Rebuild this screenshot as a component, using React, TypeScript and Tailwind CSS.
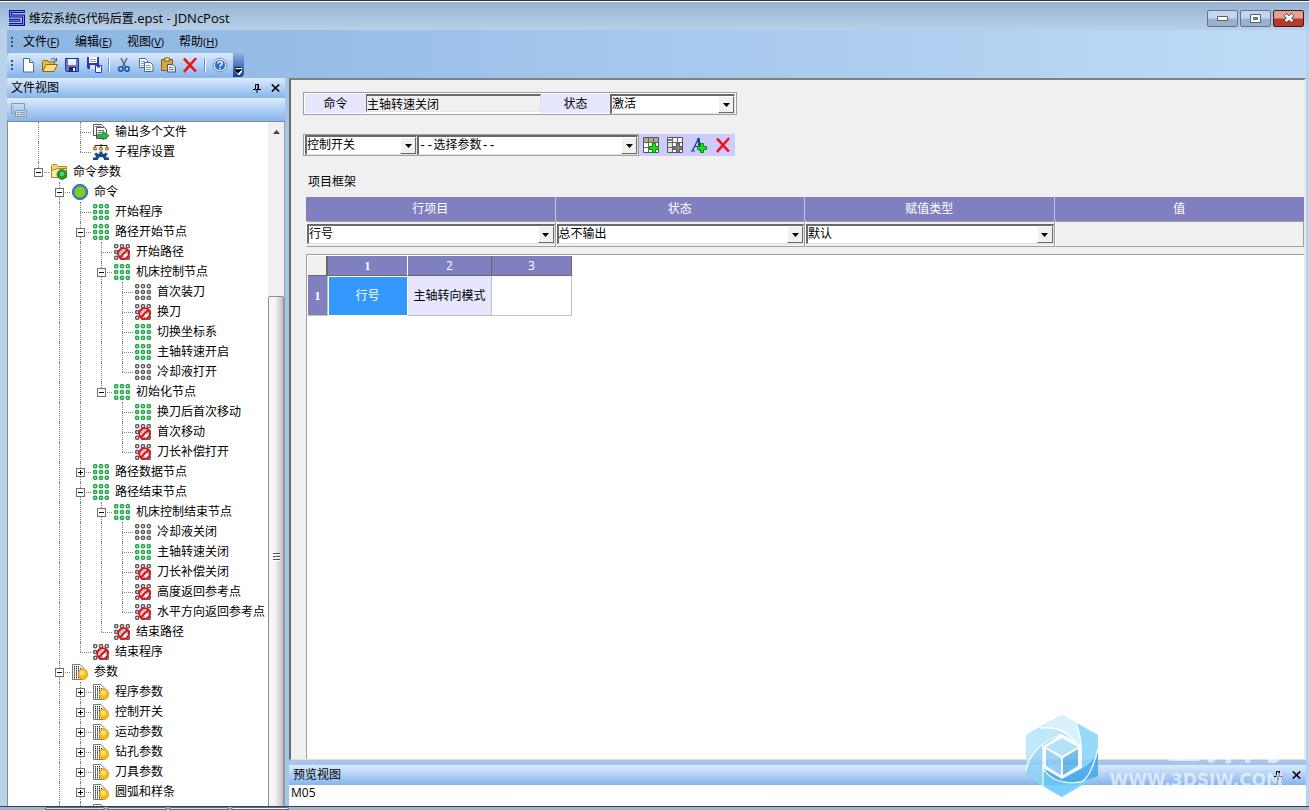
import type { ReactNode } from "react";
import clsx from "clsx";

type IconName = "on" | "idle" | "off" | "param" | "files" | "gear" | "folder" | "ball";

type Row = {
  depth: number;
  icon: IconName;
  label: string;
  box?: "+" | "-";
};

const ROWS: Row[] = [
  { depth: 2, icon: "files", label: "输出多个文件" },
  { depth: 2, icon: "gear", label: "子程序设置" },
  { depth: 0, icon: "folder", label: "命令参数", box: "-" },
  { depth: 1, icon: "ball", label: "命令", box: "-" },
  { depth: 2, icon: "on", label: "开始程序" },
  { depth: 2, icon: "on", label: "路径开始节点", box: "-" },
  { depth: 3, icon: "off", label: "开始路径" },
  { depth: 3, icon: "on", label: "机床控制节点", box: "-" },
  { depth: 4, icon: "idle", label: "首次装刀" },
  { depth: 4, icon: "off", label: "换刀" },
  { depth: 4, icon: "on", label: "切换坐标系" },
  { depth: 4, icon: "on", label: "主轴转速开启" },
  { depth: 4, icon: "idle", label: "冷却液打开" },
  { depth: 3, icon: "on", label: "初始化节点", box: "-" },
  { depth: 4, icon: "on", label: "换刀后首次移动" },
  { depth: 4, icon: "off", label: "首次移动" },
  { depth: 4, icon: "off", label: "刀长补偿打开" },
  { depth: 2, icon: "on", label: "路径数据节点", box: "+" },
  { depth: 2, icon: "on", label: "路径结束节点", box: "-" },
  { depth: 3, icon: "on", label: "机床控制结束节点", box: "-" },
  { depth: 4, icon: "idle", label: "冷却液关闭" },
  { depth: 4, icon: "on", label: "主轴转速关闭" },
  { depth: 4, icon: "off", label: "刀长补偿关闭" },
  { depth: 4, icon: "off", label: "高度返回参考点" },
  { depth: 4, icon: "off", label: "水平方向返回参考点" },
  { depth: 3, icon: "off", label: "结束路径" },
  { depth: 2, icon: "off", label: "结束程序" },
  { depth: 1, icon: "param", label: "参数", box: "-" },
  { depth: 2, icon: "param", label: "程序参数", box: "+" },
  { depth: 2, icon: "param", label: "控制开关", box: "+" },
  { depth: 2, icon: "param", label: "运动参数", box: "+" },
  { depth: 2, icon: "param", label: "钻孔参数", box: "+" },
  { depth: 2, icon: "param", label: "刀具参数", box: "+" },
  { depth: 2, icon: "param", label: "圆弧和样条", box: "+" },
  { depth: 2, icon: "param", label: "" },
  { depth: 1, icon: "param", label: "" },
];

// true when a later sibling exists at this depth, so the guide line goes on
function continues(index: number, depth: number) {
  for (let i = index + 1; i < ROWS.length; i++) {
    if (ROWS[i].depth < depth) return false;
    if (ROWS[i].depth === depth) return true;
  }
  return false;
}

function Svg({ children, size = 16 }: { children: ReactNode; size?: number }) {
  return (
    <svg width={size} height={size} viewBox={`0 0 ${size} ${size}`} aria-hidden className="block shrink-0">
      {children}
    </svg>
  );
}

function Dots({ color, fill }: { color: string; fill: string }) {
  return (
    <g fill={fill} stroke={color} strokeWidth="1.5">
      {[2.2, 8, 13.8].map((y) => [2.2, 8, 13.8].map((x) => <circle key={`${x}-${y}`} cx={x} cy={y} r="1.6" />))}
    </g>
  );
}

function TreeIcon({ name }: { name: IconName }) {
  switch (name) {
    case "on":
      return (
        <Svg>
          <Dots color="#1fa548" fill="#c9f0d0" />
        </Svg>
      );
    case "idle":
      return (
        <Svg>
          <Dots color="#5c5c5c" fill="#fff" />
        </Svg>
      );
    case "off":
      return (
        <Svg>
          <Dots color="#5c5c5c" fill="#fff" />
          <circle cx="9.6" cy="9.6" r="5.4" fill="#fff" fillOpacity=".5" stroke="#d9141c" strokeWidth="2" />
          <path d="M6 13.2 13.2 6" stroke="#d9141c" strokeWidth="2" />
        </Svg>
      );
    case "param":
      return (
        <Svg>
          <path d="M.5.5h7.5l3 3v12H.5z" fill="#fff" stroke="#777" />
          <path d="M2.5 2v13M4.5 2v13M6.5 2v13M8.5 4v11" stroke="#222" strokeDasharray="1.4 .7" />
          <ellipse cx="11" cy="10.2" rx="4.8" ry="5.4" fill="#fbb916" stroke="#d99a12" strokeWidth=".7" />
          <circle cx="10.2" cy="9" r="2.5" fill="#ffe27a" />
        </Svg>
      );
    case "files":
      return (
        <Svg>
          <path d="M.5.5h8l2 2v9H.5z" fill="#fff" stroke="#555" />
          <path d="M3.5 3.5h8l2 2v9h-10z" fill="#fff" stroke="#555" />
          <path d="M5 6.5h6M5 8.5h6M2 2.5h6" stroke="#777" />
          <path d="M4.5 10.2h5.5V7.5l6 4.3-6 4.2v-2.7H4.5z" fill="#22c03c" stroke="#0d7a22" strokeWidth=".8" />
        </Svg>
      );
    case "gear":
      return (
        <Svg>
          <path d="M8 0v4M2 4V1.5h12V4" fill="none" stroke="#222" />
          <g fill="#e6c24a" stroke="#8a6d12" strokeWidth=".8">
            <path d="M.6 3.6h2.8v2.4H.6zM6.6 3.6h2.8v2.4H6.6zM12.6 3.6h2.8v2.4h-2.8z" />
          </g>
          <path
            d="M0 16v-2.5h2.4l.6-1.5-1.8-1.8 1.900-1.700 1.900 1.500 1.500-.6V7.500h3v1.900l1.500.6 1.900-1.500 1.900 1.700L13 12l.6 1.500H16V16h-5a3 3 0 0 0-6 0z"
            fill="#174a86"
          />
        </Svg>
      );
    case "folder":
      return (
        <Svg>
          <path d="M.5 13.5v-12l1-1h4l1.5 2h8.5v11z" fill="#f3d774" stroke="#b08a28" />
          <path d="M.5 13.5v-7l6-2h9v9z" fill="#fbe9a2" stroke="#b08a28" />
          <circle cx="11" cy="10.5" r="5" fill="#1f9b2e" stroke="#157321" strokeWidth=".6" />
          <circle cx="11" cy="10" r="2.2" fill="#5fd064" />
        </Svg>
      );
    case "ball":
      return (
        <Svg>
          <circle cx="8" cy="8" r="6.6" fill="#84cc16" stroke="#3f86cc" strokeWidth="2.4" />
          <circle cx="8" cy="8" r="7.6" fill="none" stroke="#245a96" strokeWidth=".8" />
        </Svg>
      );
  }
}

function TreeRow({ row, index }: { row: Row; index: number }) {
  const next = continues(index, row.depth);
  return (
    <li className="flex h-5 items-center whitespace-nowrap">
      {Array.from({ length: row.depth }, (_, d) => (
        <span key={d} className="flex h-5 w-[21px] shrink-0 pl-2.5">
          {continues(index, d) && <span className="border-l border-dotted border-[#808080]" />}
        </span>
      ))}
      <span className="relative flex h-5 w-[21px] shrink-0 flex-col pl-2.5">
        <span className="h-2.5 border-l border-dotted border-[#808080]" />
        <span className={clsx("h-2.5 border-t border-dotted border-[#808080]", next && "border-l")} />
        {row.box && (
          <button
            type="button"
            aria-label={row.label}
            aria-expanded={row.box === "-"}
            className="absolute left-1.5 top-1.5 h-[9px] w-[9px] border border-[#707070] bg-white"
          >
            <svg width="7" height="7" viewBox="0 0 7 7" className="block" aria-hidden>
              <path d={row.box === "+" ? "M1 3.5h5M3.5 1v5" : "M1 3.5h5"} stroke="#000" />
            </svg>
          </button>
        )}
      </span>
      <span className="ml-0.5 mr-1.5">
        <TreeIcon name={row.icon} />
      </span>
      <span>{row.label}</span>
    </li>
  );
}

function RedX() {
  return (
    <Svg>
      <path
        d="M1.2 2.4 3 1l5 5.4L13 .8l1.8.9L9.4 8l5.2 5.8-1.8 1.2L8 9.8 2.8 15.5l-1.4-1.6L6.5 8z"
        fill="#f80c12"
        stroke="#f80c12"
        strokeWidth=".5"
      />
    </Svg>
  );
}

const disk = (
  <>
    <path d="M1.5 1.5h13v13h-12l-1-1z" fill="#6a74d2" stroke="#2c3590" />
    <path d="M4 2h8v6H4z" fill="#eef2ff" />
    <path d="M5 10h7v4.5H5z" fill="#222a66" />
    <path d="M9 11h2v3H9z" fill="#fff" />
  </>
);

const TOOLS: { label: string; icon: ReactNode }[] = [
  {
    label: "新建",
    icon: (
      <Svg>
        <path d="M3.5 1.5h6l4 4v9.5h-10z" fill="#fff" stroke="#5a6a86" />
        <path d="M9.5 1.5v4h4" fill="#cfdcf0" stroke="#5a6a86" />
      </Svg>
    ),
  },
  {
    label: "打开",
    icon: (
      <Svg>
        <path d="M.5 14V4.5l1-1h4l1 1.5h6V8" fill="#e9bd4c" stroke="#8c6514" />
        <path d="M.8 14.5 4 7.5h11.5l-3.5 7z" fill="#fbdc82" stroke="#8c6514" />
        <path d="M9 3c1.5-2.500 4-2 5 .5M14.5 1v3h-3" fill="none" stroke="#39567e" />
      </Svg>
    ),
  },
  { label: "保存", icon: <Svg>{disk}</Svg> },
  {
    label: "全部保存",
    icon: (
      <Svg>
        <path d="M1 0h12v12H2l-1-1z" fill="#2a36c4" />
        <path d="M3 0h8v6H3z" fill="#fff" />
        <path d="M4 8h5v4H4z" fill="#dfe6ff" />
        <path d="M4 2.5h6M4 4.5h6" stroke="#9aa6d8" />
        <path d="M9.5 8.5h6v7h-6z" fill="#f4f7ff" stroke="#2a36c4" />
        <path d="M11 8.5h3v2h-3z" fill="#2a36c4" />
      </Svg>
    ),
  },
  {
    label: "剪切",
    icon: (
      <Svg>
        <path d="M5 1 9.5 10M11 1 6.5 10" stroke="#5b6d88" strokeWidth="1.6" />
        <circle cx="4.8" cy="12" r="2.2" fill="none" stroke="#1d4fa8" strokeWidth="1.5" />
        <circle cx="11" cy="12" r="2.2" fill="none" stroke="#1d4fa8" strokeWidth="1.5" />
      </Svg>
    ),
  },
  {
    label: "复制",
    icon: (
      <Svg>
        <path d="M1.5 1.5h6l2 2v7h-8z" fill="#fff" stroke="#49699e" />
        <path d="M3 4.5h4M3 6.5h5M3 8.5h5" stroke="#7d9ccb" />
        <path d="M6.5 5.5h6l2.5 2.5v6.5h-8.5z" fill="#fff" stroke="#49699e" />
        <path d="M8 8.5h4M8 10.5h5M8 12.5h5" stroke="#7d9ccb" />
      </Svg>
    ),
  },
  {
    label: "粘贴",
    icon: (
      <Svg>
        <path d="M1.5 2.5h11v11h-11z" fill="#dba63a" stroke="#80591a" />
        <path d="M4.5 1h5v3h-5z" fill="#f3e3b5" stroke="#80591a" />
        <path d="M7.5 7.5h5.5l2.5 2.5v5h-8z" fill="#e5eaf2" stroke="#4b5b78" />
        <path d="M9 10.5h4M9 12.5h5" stroke="#7185a8" />
      </Svg>
    ),
  },
  { label: "删除", icon: <RedX /> },
  {
    label: "帮助",
    icon: (
      <Svg>
        <circle cx="8" cy="8" r="6.8" fill="#eaf3ff" stroke="#6d8fbe" />
        <circle cx="8" cy="8" r="5.2" fill="#2f6fd2" />
        <path d="M6 6.5c0-2.600 4-2.500 4 0C10 8 8 7.800 8 9.600M8 10.700v1.500" fill="none" stroke="#fff" strokeWidth="1.5" />
      </Svg>
    ),
  },
];

const MENUS = [
  ["文件", "F"],
  ["编辑", "E"],
  ["视图", "V"],
  ["帮助", "H"],
];

function Grip() {
  return (
    <span className="flex w-2.5 flex-col items-center gap-0.5" aria-hidden>
      <span className="h-0.5 w-0.5 bg-[#34527e]" />
      <span className="h-0.5 w-0.5 bg-[#34527e]" />
      <span className="h-0.5 w-0.5 bg-[#34527e]" />
    </span>
  );
}

function PanelHeader({ title }: { title: string }) {
  return (
    <header className="flex h-5 shrink-0 items-center bg-linear-to-b from-[#dcebfd] to-[#86b5ec] px-1">
      <h2 className="flex-1">{title}</h2>
      <button type="button" aria-label="固定" className="flex w-4 justify-center">
        <svg width="8" height="9" viewBox="0 0 8 9" aria-hidden>
          <path d="M2.5 5.5v-5h3v5M5 0v5.5M0 5.5h8M4 6v3" fill="none" stroke="#000" />
        </svg>
      </button>
      <button type="button" aria-label="关闭" className="flex w-4 justify-center pl-1">
        <svg width="9" height="8" viewBox="0 0 9 8" aria-hidden>
          <path d="m.8.5 7.4 7M8.2.5l-7.4 7" stroke="#000" strokeWidth="1.6" />
        </svg>
      </button>
    </header>
  );
}

function Combo({ label, value, className }: { label: string; value: string; className?: string }) {
  return (
    <div
      className={clsx(
        "relative h-5 border-l-2 border-t-2 border-b border-r border-b-[#e3e3e3] border-l-[#696969] border-r-[#e3e3e3] border-t-[#696969] bg-white",
        className,
      )}
    >
      <select
        aria-label={label}
        defaultValue={value}
        className="block h-full w-full appearance-none bg-white pr-5 font-['Liberation_Mono','Noto_Sans_CJK_SC',monospace] leading-4 text-black outline-none"
      >
        <option>{value}</option>
      </select>
      <span
        className="pointer-events-none absolute inset-y-0 right-0 flex w-4 items-center justify-center border border-b-[#696969] border-l-white border-r-[#696969] border-t-white bg-[#f0f0f0]"
        aria-hidden
      >
        <svg width="7" height="4" viewBox="0 0 7 4">
          <path d="M0 0h7L3.5 4z" />
        </svg>
      </span>
    </div>
  );
}

function WindowButton({ label, close, children }: { label: string; close?: boolean; children: ReactNode }) {
  return (
    <button
      type="button"
      aria-label={label}
      className={clsx(
        "flex h-[17px] w-[31px] items-center justify-center rounded-xs border",
        close
          ? "border-[#4a1420] bg-linear-to-b from-[#e3a196] from-45% to-[#b8392a] to-55%"
          : "border-[#5f7592] bg-linear-to-b from-[#c3d6ea] from-45% to-[#98b2ce] to-55%",
      )}
    >
      {children}
    </button>
  );
}

const gridIcon = (head: string, plus: string, edge: string, corner?: boolean) => (
  <Svg>
    <path d="M.5.5h15v15H.5z" fill="#fff" stroke="#555" />
    <path d="M1 1h14v4.5H1z" fill={head} />
    {corner && <path d="M1 5h4v10H1z" fill="#ddd" />}
    <path d="M.5 5.5h15M.5 10.5h15M5.5.5v15M10.5.5v15" stroke="#666" />
    <path d="M9.5 6.5h3v3h3v3h-3v3h-3v-3h-3v-3h3z" fill={plus} stroke={edge} />
    {corner && <path d="M2 2v2M4 2v2" stroke="#000" />}
  </Svg>
);

const PARAM_TOOLS = [
  { label: "添加列", icon: gridIcon("#b3a88a", "#19e619", "#0b8b0b") },
  { label: "插入单元格", icon: gridIcon("#f4f4f4", "#808080", "#555", true) },
  {
    label: "添加文本",
    icon: (
      <Svg>
        <path d="M0 14h4M1.5 13.5 7.5 1.5M4 9.5h4" fill="none" stroke="#123f7e" strokeWidth="1.2" />
        <path d="M7.5 1 9 13.5" stroke="#123f7e" strokeWidth="2.2" />
        <path d="M9.5 6.5h3v3h3v3h-3v3h-3v-3h-3v-3h3z" fill="#19e619" stroke="#0b8b0b" />
      </Svg>
    ),
  },
  { label: "删除参数", icon: <RedX /> },
];

function FileView() {
  return (
    <aside className="flex w-[278px] shrink-0 flex-col">
      <PanelHeader title="文件视图" />
      <div className="flex h-[23px] shrink-0 items-center bg-linear-to-b from-[#dcebfd] to-[#86b5ec] pl-1">
        <button type="button" aria-label="视图选项">
          <Svg>
            <path d="M.5 1.5h13v6M.5 1.5v10h4" fill="none" stroke="#8e98a8" />
            <path d="M2.5 3v8" stroke="#8e98a8" strokeDasharray="1 1" />
            <path d="M4.5 8.5h11v6h-11z" fill="#c7d6ea" stroke="#8e98a8" />
            <path d="M6 10.5h2M9 10.5h5M6 12.5h2M9 12.5h5" stroke="#8e98a8" />
          </Svg>
        </button>
      </div>
      <div className="flex min-h-0 flex-1 border-l border-t border-[#808c9c] bg-white">
        <ul className="min-w-0 flex-1 overflow-hidden pl-5">
          {ROWS.map((row, i) => (
            <TreeRow key={i} row={row} index={i} />
          ))}
        </ul>
        <div className="flex w-4 shrink-0 flex-col overflow-hidden bg-[#f0f0f0]" aria-hidden>
          <div className="flex h-[174px] shrink-0 justify-center pt-2">
            <svg width="7" height="4" viewBox="0 0 7 4">
              <path d="M0 4h7L3.5 0z" fill="#444" />
            </svg>
          </div>
          <div className="-mb-3 flex flex-1 flex-col items-center justify-center gap-px rounded-xs border border-[#8e8f94] bg-linear-to-r from-[#f6f6f6] from-40% to-[#c0c0c6]">
            <span className="h-0.5 w-[7px] border-b border-white bg-[#555]" />
            <span className="h-0.5 w-[7px] border-b border-white bg-[#555]" />
            <span className="h-0.5 w-[7px] border-b border-white bg-[#555]" />
          </div>
        </div>
        <div className="w-px bg-[#a0a0a0]" />
      </div>
    </aside>
  );
}

const FRAME_COLUMNS = [
  { title: "行项目", value: "行号" },
  { title: "状态", value: "总不输出" },
  { title: "赋值类型", value: "默认" },
  { title: "值", value: "" },
];

function Editor() {
  return (
    <main className="flex min-h-0 flex-1 flex-col border-b border-l-2 border-r-2 border-t-2 border-b-[#e0e0e0] border-l-[#696969] border-r-[#e8e8e8] border-t-[#808080] bg-[#f0f0f0] pt-3">
      <div className="ml-3 flex h-[23px] self-start border border-[#a0a0a0] bg-white p-px">
        <label htmlFor="cmd" className="flex w-[61px] items-center justify-center bg-[#e6e6ff]">
          命令
        </label>
        <input
          id="cmd"
          readOnly
          defaultValue="主轴转速关闭"
          className="h-[18px] w-[175px] border-l border-t-2 border-b border-r border-b-[#e3e3e3] border-l-[#696969] border-r-[#e3e3e3] border-t-[#696969] bg-[#f0f0f0] leading-4 outline-none"
        />
        <span className="flex w-[69px] items-center justify-center bg-[#e6e6ff]">状态</span>
        <Combo label="状态" value="激活" className="w-[125px]" />
      </div>

      <div className="ml-3 mt-[19px] flex h-[22px] self-start">
        <div className="flex border border-[#a0a0a0] bg-white pl-px">
          <Combo label="参数类别" value="控制开关" className="w-28" />
          <Combo label="参数" value="--选择参数--" className="w-[221px]" />
        </div>
        <div className="flex items-center gap-2 bg-[#ccccff] px-1">
          {PARAM_TOOLS.map((t) => (
            <button key={t.label} type="button" aria-label={t.label}>
              {t.icon}
            </button>
          ))}
        </div>
      </div>

      <h3 className="ml-[17px] mt-4 h-5 leading-5">项目框架</h3>

      <div className="mt-[5px] pl-[15px]">
        <table className="w-full table-fixed border-separate border-spacing-0">
          <thead>
            <tr>
              {FRAME_COLUMNS.map((c) => (
                <th
                  key={c.title}
                  className="h-6 border-r border-[#c4c4dc] bg-[#8080c0] p-0 font-normal text-white last:border-r-0"
                >
                  {c.title}
                </th>
              ))}
            </tr>
          </thead>
          <tbody>
            <tr>
              {FRAME_COLUMNS.map((c) => (
                <td key={c.title} className="h-[26px] border border-[#a0a0a0] border-l-white p-0">
                  {c.value && <Combo label={c.title} value={c.value} />}
                </td>
              ))}
            </tr>
          </tbody>
        </table>
      </div>

      <div className="ml-[15px] mt-[7px] min-h-0 flex-1 border-l border-t border-[#a0a0a0] bg-white p-px">
        <table className="table-fixed border-separate border-spacing-0 text-center">
          <thead>
            <tr className="h-5 text-white">
              <td className="w-5 border-b border-r-2 border-[#696969] bg-[#f0f0f0] p-0" />
              <th className="w-20 border-b border-r border-b-[#696969] border-r-white bg-[#8080c0] p-0 font-[Liberation_Serif] font-bold">
                1
              </th>
              <th className="w-[84px] border-b border-r border-[#696969] bg-[#8080c0] p-0 font-normal">2</th>
              <th className="w-20 border-b border-r border-[#696969] bg-[#8080c0] p-0 font-normal">3</th>
            </tr>
          </thead>
          <tbody>
            <tr className="h-10">
              <th className="border-b border-r border-[#c0c0c0] bg-[#8080c0] p-0 font-[Liberation_Serif] font-bold text-white">
                1
              </th>
              <td className="border-b border-r border-[#c0c0c0] bg-[#3399ff] p-0 text-white outline-1 -outline-offset-1 outline-white">
                行号
              </td>
              <td className="border-b border-r border-[#c0c0c0] bg-[#e6e6ff] p-0">主轴转向模式</td>
              <td className="border-b border-r border-[#c0c0c0] p-0" />
            </tr>
          </tbody>
        </table>
      </div>
    </main>
  );
}

function Watermark() {
  return (
    <div className="pointer-events-none absolute bottom-3 right-[26px] flex gap-2.5">
      <svg width="74" height="84" viewBox="0 0 74 84" opacity=".85" aria-hidden>
        <path d="M37 1 73 21v41L37 83 1 62V21z" fill="#7dd0f7" />
        <path d="M37 1 15 14C32 12 50 24 56 42c1-12-1-24-5-33z" fill="#d3effd" />
        <path d="M15 14 1 21v36C4 42 16 26 37 20 30 15 22 14 15 14z" fill="#b5e4fb" />
        <path d="M1 57v5l17 10V32C8 38 3 48 1 57z" fill="#8fd2f5" />
        <path d="M51 9c5 12 6 30 3 49 10-4 17-12 19-23V21z" fill="#84d4f8" />
        <path d="M73 35C68 54 50 62 18 54c6 15 22 17 38 14l17-6z" fill="#3fa9ea" />
        <path d="M18 54v18l19 11 19-14C38 71 24 65 18 54z" fill="#63c8f8" />
        <path
          d="M15 14C36 12 54 22 56 44M51 9c4 10 6 20 5 35M73 35C68 54 62 66 56 68 38 71 24 65 18 54M18 72V32M1 57C4 40 16 28 37 20"
          fill="none"
          stroke="#fff"
          strokeWidth="1.3"
        />
        <path d="M37 20 57 32v22L37 65 18 54V32z" fill="#fff" />
        <path d="M37 24 53 33 37 42 21 33z" fill="#a9dcf8" />
        <path d="M21 35 36 44v17L21 52z" fill="#8ccdf3" />
        <path d="M53 35 38 44v17l15-9z" fill="#5bb3e8" />
      </svg>
      <div className="flex flex-col gap-0.5 pt-1.5 text-white/60">
        <span className="text-[40px] font-bold leading-[48px]">3D世界网</span>
        <span className="font-[DejaVu_Sans] text-[17px] font-bold leading-5">WWW.3DSJW.COM</span>
      </div>
    </div>
  );
}

export default function App() {
  return (
    <div className="relative flex h-screen flex-col overflow-hidden bg-[#b9d1ea] font-['Open_Sans','Noto_Sans_CJK_SC',sans-serif] text-xs leading-4 text-black">
      <div className="flex h-[30px] shrink-0 border-t border-[#2b3340]">
        <div className="flex flex-1 items-center border-t border-white bg-linear-to-b from-[#98b3d1] to-[#b8d0e9] pl-[9px] pr-[5px]">
          <svg width="16" height="16" viewBox="0 0 16 16" aria-hidden className="mr-1 mt-1">
            <path
              d="M16 1.5H1.5V6H14.5v8.5H0M0 10.3h11.5"
              fill="none"
              stroke="#10108c"
              strokeWidth="3"
            />
            <path d="M15.5 1.5H1.5V6H14.5v8.5H.5M.5 10.3h11" fill="none" stroke="#6f93ff" />
          </svg>
          <h1 className="flex-1 pt-1">
            维宏系统G代码后置<span className="text-[13px]">.epst - JDNcPost</span>
          </h1>
          <div className="flex gap-0.5 pt-1">
            <WindowButton label="最小化">
              <svg width="11" height="5" viewBox="0 0 11 5" aria-hidden>
                <path d="M.5.5h10v4H.5z" fill="#fff" stroke="#555f70" />
              </svg>
            </WindowButton>
            <WindowButton label="最大化">
              <svg width="11" height="9" viewBox="0 0 11 9" aria-hidden>
                <path d="M.5.5h10v8H.5z" fill="#fff" stroke="#555f70" />
                <path d="M3.5 3.5h4v2h-4z" fill="#8fa8c4" stroke="#555f70" />
              </svg>
            </WindowButton>
            <WindowButton label="关闭窗口" close>
              <svg width="12" height="10" viewBox="0 0 12 10" aria-hidden>
                <path d="m2 1.5 8 7M10 1.5l-8 7" stroke="#4b4f60" strokeWidth="4.2" />
                <path d="m2.5 2 7 6M9.5 2l-7 6" stroke="#fff" strokeWidth="2.4" />
              </svg>
            </WindowButton>
          </div>
        </div>
      </div>

      <div className="flex min-h-0 flex-1 flex-col border-l-[7px] border-r-[3px] border-[#b9d1ea] bg-[#a5c5eb]">
        <div className="flex h-12 shrink-0 flex-col bg-linear-to-r from-[#8cb5e2] to-[#bfdbf7]">
          <nav className="flex h-[23px] items-center">
            <Grip />
            <div className="flex gap-3.5 whitespace-nowrap pl-1.5">
              {MENUS.map(([name, key]) => (
                <button key={key} type="button" className="flex w-[38px] items-center">
                  {name}
                  <span className="text-[11px]">
                    (<u>{key}</u>)
                  </span>
                </button>
              ))}
            </div>
          </nav>
          <div className="flex h-6 items-stretch">
            <div className="flex items-center rounded-l bg-linear-to-b from-[#dbeafc] to-[#86b4ea] pr-0.5">
              <Grip />
              {TOOLS.map((t, i) => (
                <div key={t.label} className="flex items-center">
                  {(i === 4 || i === 8) && <span className="mx-[3px] h-3.5 w-0.5 border-r border-white bg-[#6a8cbf]" />}
                  <button type="button" aria-label={t.label} className="flex w-[22px] justify-center">
                    {t.icon}
                  </button>
                </div>
              ))}
            </div>
            <button
              type="button"
              aria-label="工具栏选项"
              className="flex w-[11px] items-end justify-center rounded-r bg-linear-to-b from-[#8fb3e4] to-[#123f94] pb-0.5"
            >
              <svg width="7" height="8" viewBox="0 0 7 8" aria-hidden>
                <path d="M1 1.5h6M1 4h6L4 8z" fill="#fff" stroke="#fff" />
                <path d="M0 .5h6M0 3h6L3 6z" stroke="#000" strokeWidth=".8" />
              </svg>
            </button>
          </div>
        </div>

        <div className="flex min-h-0 flex-1 gap-1">
          <FileView />
          <div className="flex min-w-0 flex-1 flex-col">
            <Editor />
            <section className="flex shrink-0 flex-col pt-[5px]">
              <PanelHeader title="预览视图" />
              <output className="block h-[21px] bg-white pl-0.5">M05</output>
            </section>
          </div>
        </div>
      </div>

      <footer className="flex h-1 shrink-0 gap-0.5 border-t border-[#39404e] bg-[#9db5d3] pl-[45px]" aria-hidden>
        <span className="w-[60px] rounded-t-xs border border-[#5c6c84] bg-[#d3e0ef]" />
        <span className="w-[60px] rounded-t-xs border border-[#5c6c84] bg-[#d3e0ef]" />
        <span className="w-[60px] rounded-t-xs border border-[#5c6c84] bg-[#d3e0ef]" />
        <span className="w-[58px] rounded-t-xs border border-[#5c6c84] bg-[#f0f5fa]" />
      </footer>

      <Watermark />
    </div>
  );
}
